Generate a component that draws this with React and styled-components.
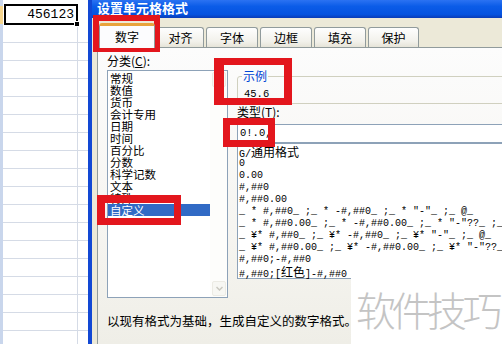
import React from "react";
import styled, { createGlobalStyle, css } from "styled-components";

const UI_FONT = `"Noto Sans CJK SC", "Noto Sans", sans-serif`;
const MONO_FONT = `"Liberation Mono", "Noto Sans CJK SC", monospace`;

const GlobalStyle = createGlobalStyle`
    html, body {
        margin: 0;
        padding: 0;
        background: #ffffff;
    }
    body {
        overflow: hidden;
    }
`;

const Screen = styled.div`
    position: relative;
    width: 502px;
    height: 344px;
    overflow: hidden;
    display: flex;
    font-family: ${UI_FONT};
    color: #000;
`;

// ---- spreadsheet behind the dialog ----
const Sheet = styled.div`
    width: 88px;
    flex-shrink: 0;
    display: flex;
    background: #fff;
`;

const RowHeader = styled.div`
    width: 3px;
    background: linear-gradient(to bottom, #c9d6ec 0 6px, #f6d58e 6px 24px, #c9d6ec 24px);
`;

const SheetGrid = styled.div`
    flex: 1;
    display: flex;
    flex-direction: column;
    padding-top: 4px;
`;

const ActiveRow = styled.div`
    height: 21px;
    flex-shrink: 0;
    display: flex;
`;

const ActiveCell = styled.div`
    position: relative;
    box-sizing: border-box;
    margin-left: 1px;
    width: 74px;
    height: 21px;
    border: 2px solid #000;
    padding-right: 2px;
    text-align: right;
    font-family: ${MONO_FONT};
    font-size: 13px;
    line-height: 17px;
`;

const FillHandle = styled.span`
    position: absolute;
    right: -4px;
    bottom: -4px;
    width: 4px;
    height: 4px;
    background: #000;
    border: 1px solid #fff;
`;

const GridRow = styled.div`
    box-sizing: border-box;
    height: 18px;
    flex-shrink: 0;
    display: flex;
    border-bottom: 1px solid #d5dbe6;
`;

const GridCell = styled.div`
    box-sizing: border-box;
    width: 75px;
    border-right: 1px solid #d5dbe6;
`;

// ---- dialog ----
const Dialog = styled.div`
    flex: 1;
    min-width: 0;
    display: flex;
    flex-direction: column;
    border-left: 4px solid #1248d4;
    background: #ece9d8;
`;

const TitleBar = styled.div`
    height: 18px;
    flex-shrink: 0;
    padding-left: 5px;
    background: linear-gradient(to bottom, #2b72f2 0%, #0b5ce8 35%, #0553e0 80%, #0a3cb6 100%);
    color: #fff;
    font-weight: bold;
    font-size: 13px;
    line-height: 15px;
    white-space: nowrap;
`;

const TabStrip = styled.div`
    height: 29px;
    flex-shrink: 0;
    display: flex;
    align-items: flex-end;
    gap: 2px;
    padding-left: 7px;
`;

const Tab = styled.div`
    box-sizing: border-box;
    width: ${(p) => p.$w}px;
    height: 20px;
    border: 1px solid #919b9c;
    border-bottom: none;
    border-radius: 3px 3px 0 0;
    background: linear-gradient(to bottom, #fefefe, #f2f1eb 70%, #e6e4d8);
    font-size: 12px;
    line-height: 19px;
    text-align: center;
    ${(p) =>
        p.$active &&
        css`
            position: relative;
            z-index: 1;
            height: 25px;
            margin-bottom: -1px;
            border-top: 3px solid #e8a33c;
            background: #fcfcfe;
            line-height: 21px;
        `}
`;

const Page = styled.div`
    flex: 1;
    margin-left: 5px;
    padding: 6px 0 0 9px;
    border-top: 1px solid #919b9c;
    border-left: 1px solid #919b9c;
    background: linear-gradient(to bottom, #fcfcfc, #f6f5f1 60%, #efeee7);
    display: flex;
    flex-direction: column;
    overflow: hidden;
`;

const Columns = styled.div`
    display: grid;
    grid-template-columns: 121px 320px;
    column-gap: 9px;
    align-items: start;
`;

const Column = styled.div`
    display: flex;
    flex-direction: column;
`;

const FieldLabel = styled.div`
    font-size: 12px;
    line-height: 14px;
    white-space: nowrap;
    & u {
        text-underline-offset: 1px;
    }
`;

const CategoryBox = styled.div`
    box-sizing: border-box;
    margin-top: 2px;
    height: 228px;
    border: 1px solid #8da2b8;
    background: #fff;
    display: flex;
`;

const CategoryItems = styled.div`
    flex: 1;
    padding-top: 1px;
`;

const CategoryItem = styled.div`
    height: 12px;
    padding-left: 2px;
    font-size: 11.5px;
    line-height: 12px;
    white-space: nowrap;
    ${(p) =>
        p.$selected &&
        css`
            background: #316ac5;
            color: #fff;
        `}
`;

const Scrollbar = styled.div`
    width: 17px;
    display: flex;
    flex-direction: column;
    justify-content: space-between;
    background: #fdfdfb;
`;

const ScrollButton = styled.div`
    box-sizing: border-box;
    height: 15px;
    margin: 1px 1px 1px 2px;
    border: 1px solid #ecebe4;
    border-radius: 2px;
    background: #f7f7f3;
    display: flex;
    align-items: center;
    justify-content: center;
`;

const SampleGroup = styled.fieldset`
    margin: 16px 0 0;
    padding: 0 0 0 4px;
    min-width: 0;
    border: 1px solid #d0d0bf;
    border-radius: 3px;
`;

const SampleLegend = styled.legend`
    padding: 0 1px;
    color: #0046d5;
    font-size: 12px;
    line-height: 12px;
`;

const SampleValue = styled.div`
    padding: 6px 0 3px 2px;
    font-family: ${MONO_FONT};
    font-size: 10.5px;
    line-height: 12px;
`;

const TypeLabel = styled(FieldLabel)`
    margin: 1px 0 5px;
`;

const TypeInput = styled.div`
    box-sizing: border-box;
    height: 19px;
    padding-left: 2px;
    border: 1px solid #8da2b8;
    background: #fff;
    font-family: ${MONO_FONT};
    font-size: 10.5px;
    line-height: 17px;
`;

const FormatList = styled.div`
    box-sizing: border-box;
    height: 136px;
    padding: 2px 0 0 1px;
    border: 1px solid #8da2b8;
    background: #fff;
`;

const FormatRow = styled.div`
    height: 12px;
    font-family: ${MONO_FONT};
    font-size: 10px;
    line-height: 12px;
    white-space: pre;
`;

const Cjk = styled.span`
    font-family: ${UI_FONT};
    font-size: 12px;
`;

const Footer = styled.div`
    margin-top: 16px;
    font-size: 12.5px;
    line-height: 14px;
    white-space: nowrap;
`;

// ---- overlays ----
const Highlight = styled.div`
    position: absolute;
    box-sizing: border-box;
    left: ${(p) => p.$x}px;
    top: ${(p) => p.$y}px;
    width: ${(p) => p.$w}px;
    height: ${(p) => p.$h}px;
    border-style: solid;
    border-color: #e3161d;
    border-width: ${(p) => p.$bw};
`;

const Watermark = styled.div`
    position: absolute;
    right: 0;
    top: 252px;
    width: 151px;
    height: 92px;
    box-sizing: border-box;
    padding: 37px 0 0 5px;
    background: #fff;
    color: #c4c4c4;
    font-size: 40px;
    font-weight: 300;
    line-height: 40px;
    letter-spacing: -4.5px;
    white-space: nowrap;
`;

const TABS = [
    { label: "数字", w: 56, active: true },
    { label: "对齐", w: 47 },
    { label: "字体", w: 52 },
    { label: "边框", w: 52 },
    { label: "填充", w: 52 },
    { label: "保护", w: 51 },
];

const CATEGORIES = [
    "常规", "数值", "货币", "会计专用", "日期", "时间",
    "百分比", "分数", "科学记数", "文本", "特殊", "自定义",
];

const FORMATS = [
    "G/通用格式",
    "0",
    "0.00",
    "#,##0",
    "#,##0.00",
    '_ * #,##0_ ;_ * -#,##0_ ;_ * "-"_ ;_ @_ ',
    '_ * #,##0.00_ ;_ * -#,##0.00_ ;_ * "-"??_ ;_ @_ ',
    '_ ¥* #,##0_ ;_ ¥* -#,##0_ ;_ ¥* "-"_ ;_ @_ ',
    '_ ¥* #,##0.00_ ;_ ¥* -#,##0.00_ ;_ ¥* "-"??_ ;_ @_ ',
    "#,##0;-#,##0",
    "#,##0;[红色]-#,##0",
];

const withCjk = (text) =>
    text.split(/([\u4e00-\u9fff]+)/).map((part, i) =>
        i % 2 ? <Cjk key={i}>{part}</Cjk> : part
    );

const Chevron = ({ up }) => (
    <svg width="7" height="5" viewBox="0 0 7 5">
        <path
            d={up ? "M0.5 4 L3.5 1 L6.5 4" : "M0.5 1 L3.5 4 L6.5 1"}
            fill="none"
            stroke="#c9c8c0"
            strokeWidth="1.5"
        />
    </svg>
);

const App = () => {
    return (
        <>
            <GlobalStyle />
            <Screen>
                <Sheet>
                    <RowHeader />
                    <SheetGrid>
                        <ActiveRow>
                            <ActiveCell>
                                456123
                                <FillHandle />
                            </ActiveCell>
                        </ActiveRow>
                        {Array.from({ length: 18 }, (_, i) => (
                            <GridRow key={i}>
                                <GridCell />
                            </GridRow>
                        ))}
                    </SheetGrid>
                </Sheet>

                <Dialog>
                    <TitleBar>设置单元格格式</TitleBar>
                    <TabStrip>
                        {TABS.map((t) => (
                            <Tab key={t.label} $w={t.w} $active={t.active}>
                                {t.label}
                            </Tab>
                        ))}
                    </TabStrip>
                    <Page>
                        <Columns>
                            <Column>
                                <FieldLabel>
                                    分类(<u>C</u>):
                                </FieldLabel>
                                <CategoryBox>
                                    <CategoryItems>
                                        {CATEGORIES.map((c) => (
                                            <CategoryItem key={c} $selected={c === "自定义"}>
                                                {c}
                                            </CategoryItem>
                                        ))}
                                    </CategoryItems>
                                    <Scrollbar>
                                        <ScrollButton>
                                            <Chevron up />
                                        </ScrollButton>
                                        <ScrollButton>
                                            <Chevron />
                                        </ScrollButton>
                                    </Scrollbar>
                                </CategoryBox>
                            </Column>
                            <Column>
                                <SampleGroup>
                                    <SampleLegend>示例</SampleLegend>
                                    <SampleValue>45.6</SampleValue>
                                </SampleGroup>
                                <TypeLabel>
                                    类型(<u>T</u>):
                                </TypeLabel>
                                <TypeInput>0!.0,</TypeInput>
                                <FormatList>
                                    {FORMATS.map((f) => (
                                        <FormatRow key={f}>{withCjk(f)}</FormatRow>
                                    ))}
                                </FormatList>
                            </Column>
                        </Columns>
                        <Footer>以现有格式为基础，生成自定义的数字格式。</Footer>
                    </Page>
                </Dialog>

                <Highlight $x={93} $y={15} $w={67} $h={37} $bw="6px" />
                <Highlight $x={214} $y={58} $w={78} $h={47} $bw="7px 8px 7px 10px" />
                <Highlight $x={223} $y={118} $w={52} $h={29} $bw="7px" />
                <Highlight $x={97} $y={195} $w={84} $h={30} $bw="8px 7px 7px 8px" />

                <Watermark>软件技巧</Watermark>
            </Screen>
        </>
    );
};

export default App;
